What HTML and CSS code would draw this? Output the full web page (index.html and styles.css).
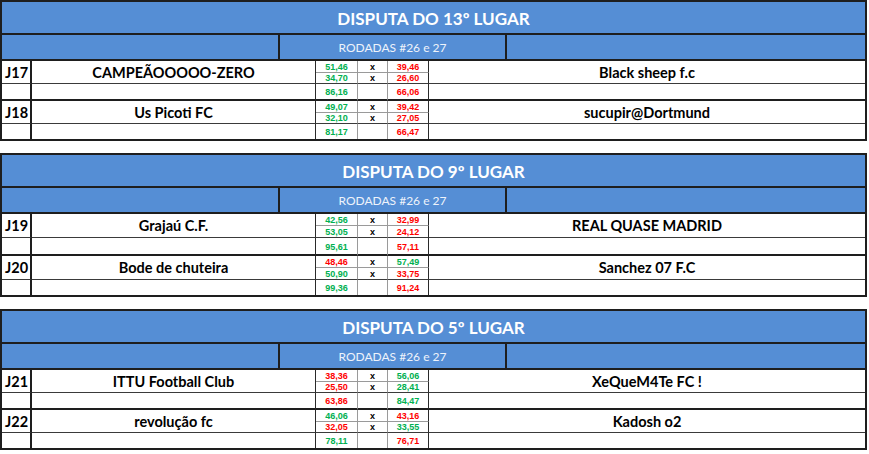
FILE: index.html
```html
<!DOCTYPE html>
<html lang="pt">
<head>
<meta charset="utf-8">
<title>Disputas</title>
<link rel="stylesheet" href="styles.css">
</head>
<body>
<div class="page">

<section class="block">
  <div class="title">DISPUTA DO 13º LUGAR</div>
  <div class="rounds"><div class="r-left"></div><div class="r-mid">RODADAS #26 e 27</div><div class="r-right"></div></div>
  <div class="grid">
    <div class="jl">J17</div><div class="team">CAMPEÃOOOOO-ZERO</div>
    <div class="sc a g">51,46</div><div class="sc a xx">x</div><div class="sc a r last">39,46</div>
    <div class="team2">Black sheep f.c</div>
    <div class="sc b g">34,70</div><div class="sc b xx">x</div><div class="sc b r last">26,60</div>
    <div class="sum jl0"></div><div class="sum tm0"></div><div class="sum sc g">86,16</div><div class="sum sc xx"></div><div class="sum sc r last">66,06</div><div class="sum rt0"></div>

    <div class="jl">J18</div><div class="team">Us Picoti FC</div>
    <div class="sc a g">49,07</div><div class="sc a xx">x</div><div class="sc a r last">39,42</div>
    <div class="team2">sucupir@Dortmund</div>
    <div class="sc b g">32,10</div><div class="sc b xx">x</div><div class="sc b r last">27,05</div>
    <div class="sum end jl0"></div><div class="sum end tm0"></div><div class="sum end sc g">81,17</div><div class="sum end sc xx"></div><div class="sum end sc r last">66,47</div><div class="sum end rt0"></div>
  </div>
</section>

<section class="block">
  <div class="title">DISPUTA DO 9º LUGAR</div>
  <div class="rounds"><div class="r-left"></div><div class="r-mid">RODADAS #26 e 27</div><div class="r-right"></div></div>
  <div class="grid tall">
    <div class="jl">J19</div><div class="team">Grajaú C.F.</div>
    <div class="sc a g">42,56</div><div class="sc a xx">x</div><div class="sc a r last">32,99</div>
    <div class="team2">REAL QUASE MADRID</div>
    <div class="sc b g">53,05</div><div class="sc b xx">x</div><div class="sc b r last">24,12</div>
    <div class="sum jl0"></div><div class="sum tm0"></div><div class="sum sc g">95,61</div><div class="sum sc xx"></div><div class="sum sc r last">57,11</div><div class="sum rt0"></div>

    <div class="jl">J20</div><div class="team">Bode de chuteira</div>
    <div class="sc a r">48,46</div><div class="sc a xx">x</div><div class="sc a g last">57,49</div>
    <div class="team2">Sanchez 07 F.C</div>
    <div class="sc b g">50,90</div><div class="sc b xx">x</div><div class="sc b r last">33,75</div>
    <div class="sum end jl0"></div><div class="sum end tm0"></div><div class="sum end sc g">99,36</div><div class="sum end sc xx"></div><div class="sum end sc r last">91,24</div><div class="sum end rt0"></div>
  </div>
</section>

<section class="block">
  <div class="title">DISPUTA DO 5º LUGAR</div>
  <div class="rounds"><div class="r-left"></div><div class="r-mid">RODADAS #26 e 27</div><div class="r-right"></div></div>
  <div class="grid">
    <div class="jl">J21</div><div class="team">ITTU Football Club</div>
    <div class="sc a r">38,36</div><div class="sc a xx">x</div><div class="sc a g last">56,06</div>
    <div class="team2">XeQueM4Te FC !</div>
    <div class="sc b r">25,50</div><div class="sc b xx">x</div><div class="sc b g last">28,41</div>
    <div class="sum jl0"></div><div class="sum tm0"></div><div class="sum sc r">63,86</div><div class="sum sc xx"></div><div class="sum sc g last">84,47</div><div class="sum rt0"></div>

    <div class="jl">J22</div><div class="team">revolução fc</div>
    <div class="sc a g">46,06</div><div class="sc a xx">x</div><div class="sc a r last">43,16</div>
    <div class="team2">Kadosh o2</div>
    <div class="sc b r">32,05</div><div class="sc b xx">x</div><div class="sc b g last">33,55</div>
    <div class="sum end jl0"></div><div class="sum end tm0"></div><div class="sum end sc g">78,11</div><div class="sum end sc xx"></div><div class="sum end sc r last">76,71</div><div class="sum end rt0"></div>
  </div>
</section>

</div>
</body>
</html>
```
FILE: styles.css
```css
* { box-sizing: border-box; }
html, body { margin: 0; padding: 0; background: #ffffff; }
body { font-family: "Lato", "Liberation Sans", sans-serif; color: #000; }

.page {
  width: 867px;
  display: flex;
  flex-direction: column;
  gap: 12px;
}

.block {
  border: 2px solid #1e1e1e;
  display: flex;
  flex-direction: column;
}

.title {
  height: 33px;
  background: #558ed5;
  border-bottom: 2px solid #1e1e1e;
  color: #ffffff;
  font-weight: 700;
  font-size: 17px;
  display: flex;
  align-items: center;
  justify-content: center;
  padding-top: 2px;
}

.rounds {
  height: 26px;
  background: #558ed5;
  border-bottom: 2px solid #1e1e1e;
  display: grid;
  grid-template-columns: 278px 227px 1fr;
}
.r-left, .r-mid { border-right: 2px solid #1e1e1e; }
.r-mid {
  color: #eef3fb;
  font-size: 12px;
  display: flex;
  align-items: center;
  justify-content: center;
}

.grid {
  display: grid;
  grid-template-columns: 30px 284px 42px 30px 41px 1fr;
  grid-template-rows: 12px 11px 17px 12px 11px 15px;
}
.grid.tall {
  grid-template-rows: 12px 12px 18px 12px 12px 15px;
}

.jl {
  grid-row: span 2;
  border-right: 2px solid #1e1e1e;
  border-bottom: 1px solid #3a3a3a;
  font-weight: 700;
  font-size: 14.5px;
  display: flex;
  align-items: center;
  padding-left: 3px;
}
.team, .team2 {
  grid-row: span 2;
  border-bottom: 1px solid #3a3a3a;
  font-weight: 700;
  font-size: 14.5px;
  display: flex;
  align-items: center;
  justify-content: center;
}
.team { border-right: 1px solid #2a2a2a; }
.team2 { grid-column: 6; }

.sc {
  font-family: "Liberation Sans", Arial, sans-serif;
  font-weight: 700;
  font-size: 9px;
  display: flex;
  align-items: center;
  justify-content: center;
  border-right: 1px solid #9a9a9a;
}
.sc.last { border-right: 1px solid #2a2a2a; }
.sc.a { border-bottom: 1px solid #9a9a9a; }
.sc.b { border-bottom: 1px solid #3a3a3a; }
.g { color: #00b050; }
.r { color: #ff0000; }
.xx { color: #000; }

.sum { border-bottom: 2px solid #1e1e1e; }
.sum.end { border-bottom: none; }
.sum.jl0 { border-right: 2px solid #1e1e1e; }
.sum.tm0 { border-right: 1px solid #2a2a2a; }
.sum.sc { padding-top: 1px; }
```
